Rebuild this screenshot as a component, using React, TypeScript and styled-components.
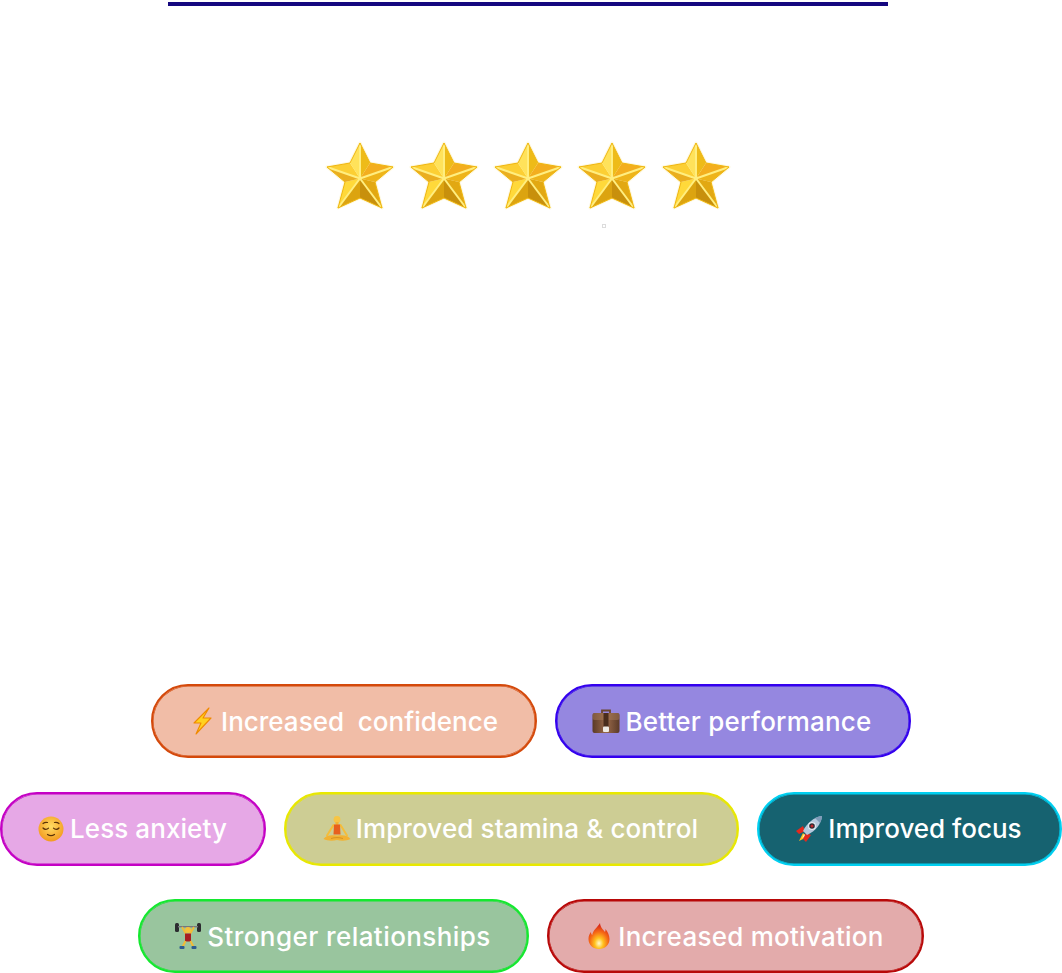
import styled, { createGlobalStyle } from "styled-components";

const GlobalStyle = createGlobalStyle`
  html, body {
    margin: 0;
    padding: 0;
    background: #ffffff;
    overflow: hidden;
  }
`;

const Page = styled.div`
  width: 1062px;
  height: 973px;
  display: flex;
  flex-direction: column;
  font-family: Inter, "Liberation Sans", sans-serif;
`;

const TopBar = styled.div`
  width: 720px;
  height: 4px;
  margin: 2px 0 0 168px;
  background: #15077f;
`;

const Stars = styled.div`
  display: flex;
  gap: 12px;
  margin: 134px 0 0 324px;
`;

const StarIcon = styled.svg`
  width: 72px;
  height: 72px;
  filter: blur(0.35px);
`;

const Speck = styled.div`
  width: 2px;
  height: 2px;
  margin: 12px 0 0 602px;
  border: 1px solid #dcdcdc;
`;

const Tags = styled.div`
  display: flex;
  flex-direction: column;
  gap: 33.5px;
  margin-top: 456px;
`;

const TagRow = styled.div`
  display: flex;
  justify-content: center;
  gap: 18px;
`;

const Tag = styled.div<{ $fill: string; $edge: string; $w: number; $track: number }>`
  box-sizing: border-box;
  width: ${(p) => p.$w}px;
  height: 74px;
  padding-right: 2px;
  display: flex;
  align-items: center;
  justify-content: center;
  gap: 5px;
  border-radius: 37px;
  border: 2px solid ${(p) => p.$edge};
  box-shadow: inset 0 0 0 0.5px ${(p) => p.$edge};
  background: ${(p) => p.$fill};
  color: #ffffff;
  font-size: 26px;
  font-weight: 500;
  letter-spacing: ${(p) => p.$track}px;
  white-space: pre;
`;

const Emoji = styled.svg`
  width: 28px;
  height: 28px;
  flex: none;
`;

const Star = () => {
  const c = "36,38.5";
  const pts = [
    "36,3", "46,23", "69,27", "51,42", "58,68",
    "36,58", "14,68", "21,42", "3,27", "26,23",
  ];
  const fills = [
    "#eebb18", "#f3ae1e", "#eeb41a", "#e2a812", "#c8900c",
    "#dca410", "#ffd93a", "#eaae20", "#fccf34", "#ffe25a",
  ];
  return (
    <StarIcon viewBox="0 0 72 72">
      <polygon
        points={pts.join(" ")}
        fill="#fff8d0"
        stroke="#fdf8e0"
        strokeWidth="3"
        strokeLinejoin="round"
      />
      {pts.map((p, i) => (
        <polygon
          key={p}
          points={`${c} ${p} ${pts[(i + 1) % 10]}`}
          fill={fills[i]}
        />
      ))}
      {[0, 2, 4, 6, 8].map((i) => (
        <polyline
          key={i}
          points={`${c} ${pts[i]}`}
          stroke="#ffee80"
          strokeWidth="2"
        />
      ))}
      <polygon
        points={pts.join(" ")}
        fill="none"
        stroke="#f0b60e"
        strokeWidth="1"
      />
    </StarIcon>
  );
};

const Bolt = () => (
  <Emoji viewBox="0 0 28 28">
    <polygon
      points="21,1 6,16 13,16 8,27 23,11 15,11"
      fill="#ffd21f"
      stroke="#f08a00"
      strokeWidth="1.1"
      strokeLinejoin="round"
    />
  </Emoji>
);

const Briefcase = () => (
  <Emoji viewBox="0 0 28 28">
    <defs>
      <linearGradient id="caseFill" x1="0" y1="0" x2="1" y2="0">
        <stop offset="0%" stopColor="#5a3a28" />
        <stop offset="50%" stopColor="#9a6a4a" />
        <stop offset="100%" stopColor="#5a3a28" />
      </linearGradient>
    </defs>
    <path d="M10 7V3.500h8V7" fill="none" stroke="#6b4630" strokeWidth="1.800" />
    <rect x="0.500" y="6" width="27" height="20" rx="2" fill="url(#caseFill)" />
    <rect x="0.500" y="6" width="27" height="7" rx="2" fill="#a67a58" opacity="0.5" />
    <rect x="11.500" y="6" width="5" height="14" fill="#4a2d1c" />
    <rect x="11" y="19.500" width="6" height="5.500" rx="1" fill="#efebe4" />
  </Emoji>
);

const Relieved = () => (
  <Emoji viewBox="0 0 28 28">
    <defs>
      <radialGradient id="faceFill" cx="50%" cy="40%" r="60%">
        <stop offset="0%" stopColor="#ffdc62" />
        <stop offset="100%" stopColor="#f39a1f" />
      </radialGradient>
    </defs>
    <circle cx="14" cy="14" r="12.500" fill="url(#faceFill)" />
    <g fill="none" stroke="#5b3308" strokeWidth="1.200" strokeLinecap="round">
      <path d="M6 13c1.500 1.800 4 1.800 5.500 0.200" />
      <path d="M16.500 13.200c1.500 1.600 4 1.600 5.500-0.200" />
      <path d="M6 8.500c1.500-1.200 3-1.400 4.500-1" />
      <path d="M17.500 7.500c1.500-.4 3-.2 4.500 1" />
      <path d="M10.500 19.500c2 1.400 5 1.400 7 0" />
    </g>
  </Emoji>
);

const Lotus = () => (
  <Emoji viewBox="0 0 28 28">
    <path d="M10.500 10L4 20.500M17.500 10L24 20.500" stroke="#f5bd3a" strokeWidth="2" strokeLinecap="round" />
    <circle cx="14" cy="4.500" r="3.400" fill="#f7c544" />
    <rect x="12.500" y="7" width="3" height="3" fill="#f2b233" />
    <path d="M11 9.500h6L17.500 19.500h-7z" fill="#e8601e" />
    <path d="M0.500 24c2-3 6-4.500 13.500-3.500C21.500 19.500 25.500 21 27.500 24c-4 2-9 2-13.500 1-4.500 1-9.500 1-13.500-1z" fill="#f2b233" />
    <path d="M8 23.500c4-1.200 8-1.200 12 0" fill="none" stroke="#cf8a1c" strokeWidth="0.800" />
  </Emoji>
);

const Rocket = () => (
  <Emoji viewBox="0 0 28 28">
    <path d="M4 26l4-8 4 4z" fill="#ffc21f" />
    <path d="M7 23l2-4 2 2z" fill="#fff2a0" />
    <path d="M1 16l7-5 2 5-6 3z" fill="#e3291e" />
    <path d="M11 27l5-7-5-2-3 6z" fill="#e3291e" />
    <path d="M8 16C12 8 19 2 27 1c-1 8-6 15-15 19z" fill="#b4c8dc" />
    <path d="M27 1c-3 .3-5 1-7 2l5 5c1-2 2-4 2-7z" fill="#7f9bb8" />
    <circle cx="17" cy="11" r="3.400" fill="#2a2a33" stroke="#e4ecf3" strokeWidth="1.200" />
    <circle cx="17" cy="11" r="1.500" fill="#c2272d" />
  </Emoji>
);

const Lifter = () => (
  <Emoji viewBox="0 0 28 28">
    <rect x="1" y="1" width="4" height="9" rx="1.500" fill="#2c2c30" />
    <rect x="23" y="1" width="4" height="9" rx="1.500" fill="#2c2c30" />
    <rect x="4" y="4" width="20" height="1.400" fill="#77777d" />
    <path d="M8 5l4 7M20 5l-4 7" stroke="#f2bb35" strokeWidth="1.800" />
    <circle cx="14" cy="8" r="3" fill="#f5c13a" />
    <rect x="11" y="11.500" width="6" height="8" fill="#a81e22" />
    <path d="M11.500 19l-3 6M16.500 19l3 6" stroke="#f2bb35" strokeWidth="2" />
    <rect x="5.500" y="24" width="5" height="3" rx="1" fill="#2d5c8f" />
    <rect x="17.500" y="24" width="5" height="3" rx="1" fill="#2d5c8f" />
  </Emoji>
);

const Fire = () => (
  <Emoji viewBox="0 0 28 28">
    <defs>
      <radialGradient id="flameFill" cx="50%" cy="78%" r="68%">
        <stop offset="0%" stopColor="#fffbd0" />
        <stop offset="30%" stopColor="#ffc21f" />
        <stop offset="65%" stopColor="#f66a16" />
        <stop offset="100%" stopColor="#d92c1a" />
      </radialGradient>
    </defs>
    <path
      d="M15 1c.5 5 3 6 5 9 .5-1 .6-2 .4-3 2.500 3 4.100 6.500 4.100 10 0 6-4.500 10-10.500 10S3.500 23 3.500 17c0-3 1.200-5.500 2.500-7 0 1.500.5 2.500 1.300 3C8 8 12 6 15 1z"
      fill="url(#flameFill)"
    />
  </Emoji>
);

const rows = [
  [
    { icon: <Bolt />, text: "Increased  confidence", fill: "#f1bda7", edge: "#d4490b", w: 386, track: 0 },
    { icon: <Briefcase />, text: "Better performance", fill: "#9587e0", edge: "#3300ee", w: 356, track: 0.22 },
  ],
  [
    { icon: <Relieved />, text: "Less anxiety", fill: "#e6a8e6", edge: "#c400c4", w: 266, track: 0.08 },
    { icon: <Lotus />, text: "Improved stamina & control", fill: "#cdcd94", edge: "#e8e800", w: 455, track: 0.12 },
    { icon: <Rocket />, text: "Improved focus", fill: "#166270", edge: "#00cff0", w: 305, track: 0 },
  ],
  [
    { icon: <Lifter />, text: "Stronger relationships", fill: "#99c59e", edge: "#14e82f", w: 391, track: 0.43 },
    { icon: <Fire />, text: "Increased motivation", fill: "#e3abab", edge: "#b80808", w: 377, track: 0.25 },
  ],
];

const App = () => {
  return (
    <Page>
      <GlobalStyle />
      <TopBar />
      <Stars>
        {[0, 1, 2, 3, 4].map((i) => (
          <Star key={i} />
        ))}
      </Stars>
      <Speck />
      <Tags>
        {rows.map((row, i) => (
          <TagRow key={i}>
            {row.map((t) => (
              <Tag key={t.text} $fill={t.fill} $edge={t.edge} $w={t.w} $track={t.track}>
                {t.icon}
                {t.text}
              </Tag>
            ))}
          </TagRow>
        ))}
      </Tags>
    </Page>
  );
};

export default App;
